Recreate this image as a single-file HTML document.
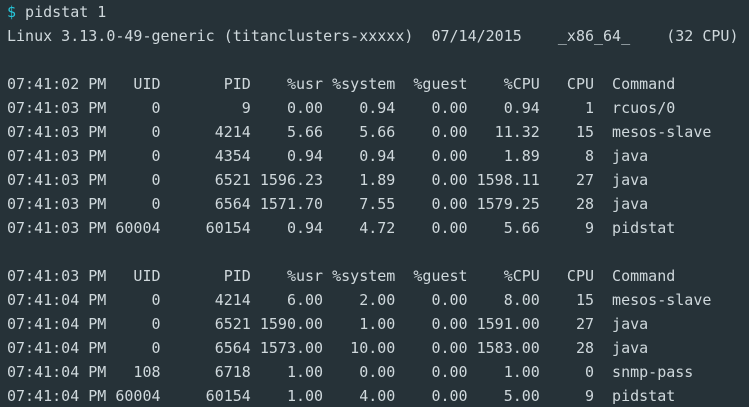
<!DOCTYPE html>
<html><head><meta charset="utf-8"><style>
html,body{margin:0;padding:0;background:#263238;width:749px;height:407px;overflow:hidden}
pre{margin:0;padding:0 0 0 7px;font-family:"DejaVu Sans Mono","Liberation Mono",monospace;font-size:15px;line-height:24px;color:#cfd8dc}
.c{color:#26c6da}
</style></head><body><pre><span class="c">$</span> pidstat 1
Linux 3.13.0-49-generic (titanclusters-xxxxx)  07/14/2015    _x86_64_    (32 CPU)

07:41:02 PM   UID       PID    %usr %system  %guest    %CPU   CPU  Command
07:41:03 PM     0         9    0.00    0.94    0.00    0.94     1  rcuos/0
07:41:03 PM     0      4214    5.66    5.66    0.00   11.32    15  mesos-slave
07:41:03 PM     0      4354    0.94    0.94    0.00    1.89     8  java
07:41:03 PM     0      6521 1596.23    1.89    0.00 1598.11    27  java
07:41:03 PM     0      6564 1571.70    7.55    0.00 1579.25    28  java
07:41:03 PM 60004     60154    0.94    4.72    0.00    5.66     9  pidstat

07:41:03 PM   UID       PID    %usr %system  %guest    %CPU   CPU  Command
07:41:04 PM     0      4214    6.00    2.00    0.00    8.00    15  mesos-slave
07:41:04 PM     0      6521 1590.00    1.00    0.00 1591.00    27  java
07:41:04 PM     0      6564 1573.00   10.00    0.00 1583.00    28  java
07:41:04 PM   108      6718    1.00    0.00    0.00    1.00     0  snmp-pass
07:41:04 PM 60004     60154    1.00    4.00    0.00    5.00     9  pidstat</pre></body></html>
